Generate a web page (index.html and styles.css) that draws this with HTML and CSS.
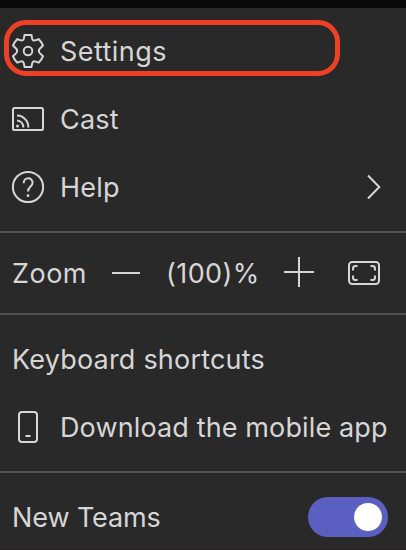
FILE: index.html
```
<!DOCTYPE html>
<html lang="en">
<head>
    <meta charset="UTF-8">
    <meta name="viewport" content="width=device-width, initial-scale=1.0">
    <title>Settings menu</title>
    <link rel="stylesheet" href="styles.css">
</head>
<body>

    <div class="menu">
        <div class="group">
            <div class="item">
                <svg class="icon" viewBox="0 0 32 36">
                    <path d="M12.6 2H19.4L20.2 5.8Q20.8 8 23 7.4L26.8 6.2Q29.6 9 31 12.6L28 15.4Q25.8 18 28 20.4L31 23.2Q29.6 27 26.8 29.6L23 28.4Q20.8 28 20.2 30.2L19.4 34H12.6L11.8 30.2Q11.2 28 9 28.4L5.2 29.6Q2.4 27 1 23.2L4 20.4Q6.2 18 4 15.4L1 12.6Q2.4 9 5.2 6.2L9 7.4Q11.2 8 11.8 5.8Z"/>
                    <circle cx="16" cy="18" r="4.3"/>
                </svg>
                <span class="label settings">Settings</span>
                <span class="highlight"></span>
            </div>
            <div class="item">
                <svg class="icon" viewBox="0 0 32 36">
                    <rect x="1" y="7" width="30" height="22" rx="1.6"/>
                    <path d="M5 14.5A11.5 11.5 0 0 1 16.3 26.5M5 19.5A6.5 6.5 0 0 1 11.3 26.5"/>
                    <circle class="dot" cx="5.5" cy="25" r="1.5"/>
                </svg>
                <span class="label cast">Cast</span>
            </div>
            <div class="item">
                <svg class="icon" viewBox="0 0 32 36">
                    <circle cx="16" cy="18" r="15.1"/>
                    <path d="M11.7 14.2C11.7 7.8 20.6 7.8 20.6 13.8C20.6 17.6 16 17.6 16 22.5"/>
                    <circle class="dot" cx="16" cy="26.7" r="1.4"/>
                </svg>
                <span class="label help">Help</span>
                <svg class="chevron" viewBox="0 0 16 28">
                    <path d="M2 2.5L13.3 14L2 25.5"/>
                </svg>
            </div>
        </div>

        <div class="zoom">
            <span class="label zoom-label">Zoom</span>
            <svg class="minus" viewBox="0 0 28 30">
                <path d="M0 15H28"/>
            </svg>
            <span class="label percent">(100)%</span>
            <svg class="plus" viewBox="0 0 30 30">
                <path d="M0 14H30M15 -1V29"/>
            </svg>
            <svg class="full" viewBox="0 0 32 24">
                <rect x="1" y="1" width="30" height="22" rx="3.2"/>
                <path d="M5 9.5V7.5Q5 5 7.5 5H9.5M22.5 5H24.5Q27 5 27 7.5V9.5M27 14.5V16.5Q27 19 24.5 19H22.5M9.5 19H7.5Q5 19 5 16.5V14.5"/>
            </svg>
        </div>

        <div class="group">
            <div class="item">
                <span class="label keyboard">Keyboard shortcuts</span>
            </div>
            <div class="item">
                <svg class="icon" viewBox="0 0 32 36">
                    <rect x="7" y="3" width="18" height="30" rx="3"/>
                    <path d="M13.5 27H18.5"/>
                </svg>
                <span class="label download">Download the mobile app</span>
            </div>
        </div>

        <div class="group last">
            <div class="item">
                <span class="label teams">New Teams</span>
                <span class="toggle"><span class="knob"></span></span>
            </div>
        </div>
    </div>

</body>
</html>
```
FILE: styles.css
```
body {
    margin: 0;
    height: 550px;
    overflow: hidden;
    background-color: #292929;
    color: #d6d6d6;
    font-family: Inter, "Liberation Sans", sans-serif;
    font-size: 27px;
}

.menu {
    box-sizing: border-box;
    height: 550px;
    border-top: 8px solid #0a0a0a;
    border-bottom: 1px solid #271c20;
}

.group {
    padding: 10px 0;
    border-bottom: 2px solid #525252;
}

.group:first-child {
    padding-top: 9px;
}

.last {
    padding-bottom: 0;
    border-bottom: none;
}

.item {
    position: relative;
    display: flex;
    align-items: center;
    box-sizing: border-box;
    height: 68px;
    padding: 0 12px;
}

.label {
    padding-top: 2px;
    line-height: 36px;
    white-space: nowrap;
}

.settings {
    letter-spacing: 0.45px;
}

.cast, .help {
    letter-spacing: 0.2px;
}

.keyboard {
    letter-spacing: 0.2px;
}

.download {
    letter-spacing: 0.13px;
}

.teams {
    letter-spacing: -0.1px;
}

.icon {
    width: 32px;
    height: 36px;
    margin-right: 16px;
}

svg {
    flex: none;
    fill: none;
    stroke: #d6d6d6;
    stroke-width: 2;
}

.dot {
    fill: #d6d6d6;
    stroke: none;
}

.highlight {
    position: absolute;
    left: 4px;
    top: 3px;
    box-sizing: border-box;
    width: 336px;
    height: 56px;
    border: 5px solid #ee4024;
    border-radius: 22px;
}

.chevron {
    width: 16px;
    height: 28px;
    margin-left: auto;
    margin-right: 12px;
}

.zoom {
    display: flex;
    align-items: center;
    height: 80px;
    padding-left: 12px;
    border-bottom: 2px solid #525252;
}

.zoom-label {
    width: 100px;
    letter-spacing: 0.5px;
}

.minus {
    width: 28px;
    height: 30px;
    margin-right: 26px;
}

.percent {
    width: 118px;
    letter-spacing: 0.4px;
}

.plus {
    width: 30px;
    height: 30px;
    margin-right: 34px;
    overflow: visible;
}

.full {
    width: 32px;
    height: 24px;
}

.toggle {
    display: flex;
    align-items: center;
    justify-content: flex-end;
    box-sizing: border-box;
    width: 80px;
    height: 40px;
    margin-left: auto;
    margin-right: 6px;
    padding-right: 6px;
    border-radius: 20px;
    background-color: #5b5fc2;
}

.knob {
    width: 28px;
    height: 28px;
    border-radius: 50%;
    background-color: white;
}
```
